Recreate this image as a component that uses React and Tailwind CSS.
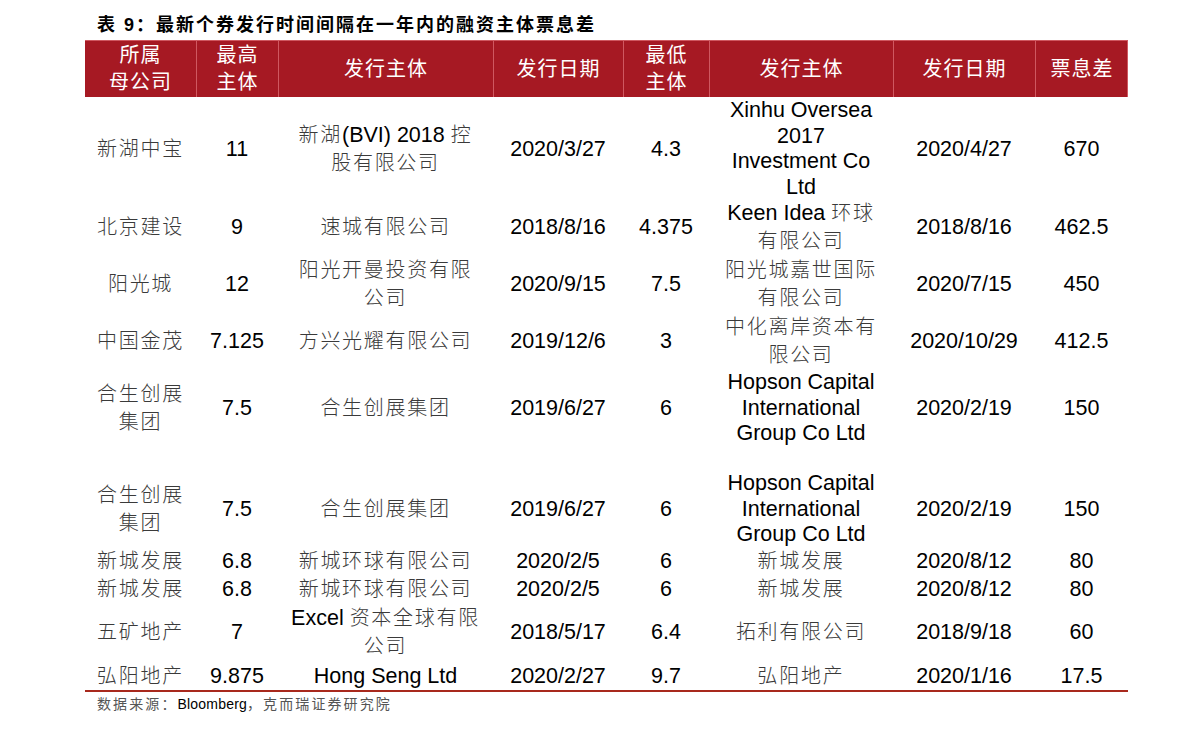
import React from 'react';

const COLS = "grid grid-cols-[111px_82px_215px_130px_86px_184px_142px_93px]";

const header = [
  ["所属", "母公司"],
  ["最高", "主体"],
  ["发行主体"],
  ["发行日期"],
  ["最低", "主体"],
  ["发行主体"],
  ["发行日期"],
  ["票息差"],
];

const hopson = ["Hopson Capital", "International", "Group Co Ltd"];
const xincheng = [["新城发展"], ["6.8"], ["新城环球有限公司"], ["2020/2/5"], ["6"], ["新城发展"], ["2020/8/12"], ["80"]];
const hesheng = [["合生创展", "集团"], ["7.5"], ["合生创展集团"], ["2019/6/27"], ["6"], hopson, ["2020/2/19"], ["150"]];

const rows = [
  { h: "h-[101px]", cells: [["新湖中宝"], ["11"], ["新湖(BVI) 2018 控", "股有限公司"], ["2020/3/27"], ["4.3"], ["Xinhu Oversea", "2017", "Investment Co", "Ltd"], ["2020/4/27"], ["670"]] },
  { h: "h-[57px]", cells: [["北京建设"], ["9"], ["速城有限公司"], ["2018/8/16"], ["4.375"], ["Keen Idea 环球", "有限公司"], ["2018/8/16"], ["462.5"]] },
  { h: "h-[57px]", cells: [["阳光城"], ["12"], ["阳光开曼投资有限", "公司"], ["2020/9/15"], ["7.5"], ["阳光城嘉世国际", "有限公司"], ["2020/7/15"], ["450"]] },
  { h: "h-[57px]", cells: [["中国金茂"], ["7.125"], ["方兴光耀有限公司"], ["2019/12/6"], ["3"], ["中化离岸资本有", "限公司"], ["2020/10/29"], ["412.5"]] },
  { h: "h-[76px]", cells: hesheng },
  { h: "h-[25px]", cells: null },
  { h: "h-[76px]", cells: hesheng },
  { h: "h-[28px]", cells: xincheng },
  { h: "h-[29px]", cells: xincheng },
  { h: "h-[57px]", cells: [["五矿地产"], ["7"], ["Excel 资本全球有限", "公司"], ["2018/5/17"], ["6.4"], ["拓利有限公司"], ["2018/9/18"], ["60"]] },
  { h: "h-[30px]", cells: [["弘阳地产"], ["9.875"], ["Hong Seng Ltd"], ["2020/2/27"], ["9.7"], ["弘阳地产"], ["2020/1/16"], ["17.5"]] },
];

// CJK runs get a lighter, spaced look like the PDF original
function Runs({ text }) {
  const parts = text.split(/([\u3000-\u9fff\uff00-\uffef]+)/).filter(Boolean);
  return parts.map((p, i) =>
    /[\u3000-\u9fff\uff00-\uffef]/.test(p) ? (
      <span key={i} className="text-[20px] tracking-[1.7px] text-[#3a3a3a] font-light">{p}</span>
    ) : (
      <span key={i}>{p}</span>
    )
  );
}

function Cell({ lines }) {
  const lead = lines.length > 2 ? "leading-[25.5px]" : "leading-[28px]";
  return (
    <div className={`flex flex-col items-center justify-center pt-[1px] text-center ${lead}`}>
      {lines.map((l, i) => (
        <div key={i} className="whitespace-nowrap">
          <Runs text={l} />
        </div>
      ))}
    </div>
  );
}

export default function App() {
  return (
    <div className="min-h-screen bg-white font-['Liberation_Sans','Noto_Sans_CJK_SC',sans-serif] text-black">
      <div className="ml-[85px] w-[1043px]">
        <div className="h-[40px] pl-[12px] pt-[13px] text-[18px] font-bold leading-[24px] tracking-[2px] whitespace-nowrap">
          表 9：最新个券发行时间间隔在一年内的融资主体票息差
        </div>

        <div className={`${COLS} h-[57px] bg-[#a61923] border-t border-r border-[#cf5860] text-white`}>
          {header.map((lines, i) => (
            <div
              key={i}
              className={`flex flex-col items-center justify-center text-[20px] leading-[27px] tracking-[1px] ${i > 0 ? "border-l border-[#cf5860]" : ""}`}
            >
              {lines.map((l, j) => (
                <div key={j} className="whitespace-nowrap">{l}</div>
              ))}
            </div>
          ))}
        </div>

        {rows.map((r, i) => (
          <div key={i} className={`${COLS} ${r.h} text-[21.5px]`}>
            {r.cells && r.cells.map((c, j) => <Cell key={j} lines={c} />)}
          </div>
        ))}

        <div className="h-[2px] bg-[#a8291d]" />

        <div className="pl-[12px] pt-[2px] text-[14px] leading-[20px] tracking-[2.1px] text-[#555] whitespace-nowrap">
          数据来源：<span className="text-black tracking-[0.2px]">Bloomberg</span>，克而瑞证券研究院
        </div>
      </div>
    </div>
  );
}
